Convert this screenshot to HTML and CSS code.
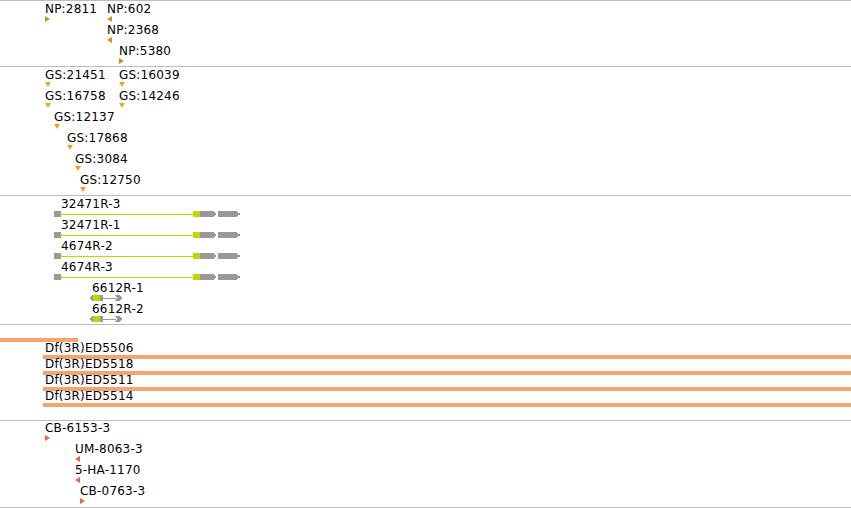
FILE: index.html
```html
<!DOCTYPE html>
<html>
<head>
<meta charset="utf-8">
<link rel="stylesheet" href="styles.css">
</head>
<body>
<div class="tracks">
  <div class="track t1">
    <div class="feat" style="left:45px;top:1px"><span class="lbl">NP:2811</span><i class="tri r np"></i></div>
    <div class="feat" style="left:107px;top:1px"><span class="lbl">NP:602</span><i class="tri l np"></i></div>
    <div class="feat" style="left:107px;top:22px"><span class="lbl">NP:2368</span><i class="tri l np"></i></div>
    <div class="feat" style="left:119px;top:43px"><span class="lbl">NP:5380</span><i class="tri r np"></i></div>
  </div>
  <div class="track t2">
    <div class="feat" style="left:45px;top:1px"><span class="lbl">GS:21451</span><i class="tri d"></i></div>
    <div class="feat" style="left:119px;top:1px"><span class="lbl">GS:16039</span><i class="tri d"></i></div>
    <div class="feat" style="left:45px;top:22px"><span class="lbl">GS:16758</span><i class="tri d"></i></div>
    <div class="feat" style="left:119px;top:22px"><span class="lbl">GS:14246</span><i class="tri d"></i></div>
    <div class="feat" style="left:54px;top:43px"><span class="lbl">GS:12137</span><i class="tri d"></i></div>
    <div class="feat" style="left:67px;top:64px"><span class="lbl">GS:17868</span><i class="tri d"></i></div>
    <div class="feat" style="left:75px;top:85px"><span class="lbl">GS:3084</span><i class="tri d"></i></div>
    <div class="feat" style="left:80px;top:106px"><span class="lbl">GS:12750</span><i class="tri d"></i></div>
  </div>
  <div class="track t3">
    <div class="feat" style="left:54px;top:1px"><span class="lbl in7">32471R-3</span>
      <svg class="gene" width="188" height="6" viewBox="0 0 188 6"><rect x="0" y="0" width="7" height="6" fill="#999"/><polygon points="6,2 9,3 6,4" fill="#c3d400"/><rect x="7" y="3" width="132" height="1" fill="#c3d400"/><rect x="139" y="0" width="7" height="6" fill="#c3d400"/><polygon points="146,0 159,0 163,3 159,6 146,6" fill="#999"/><polygon points="164,0 182,0 187,3 182,6 164,6" fill="#999"/></svg></div>
    <div class="feat" style="left:54px;top:22px"><span class="lbl in7">32471R-1</span>
      <svg class="gene" width="188" height="6" viewBox="0 0 188 6"><rect x="0" y="0" width="7" height="6" fill="#999"/><polygon points="6,2 9,3 6,4" fill="#c3d400"/><rect x="7" y="3" width="132" height="1" fill="#c3d400"/><rect x="139" y="0" width="7" height="6" fill="#c3d400"/><polygon points="146,0 159,0 163,3 159,6 146,6" fill="#999"/><polygon points="164,0 182,0 187,3 182,6 164,6" fill="#999"/></svg></div>
    <div class="feat" style="left:54px;top:43px"><span class="lbl in7">4674R-2</span>
      <svg class="gene" width="188" height="6" viewBox="0 0 188 6"><rect x="0" y="0" width="7" height="6" fill="#999"/><polygon points="6,2 9,3 6,4" fill="#c3d400"/><rect x="7" y="3" width="132" height="1" fill="#c3d400"/><rect x="139" y="0" width="7" height="6" fill="#c3d400"/><polygon points="146,0 159,0 163,3 159,6 146,6" fill="#999"/><polygon points="164,0 182,0 187,3 182,6 164,6" fill="#999"/></svg></div>
    <div class="feat" style="left:54px;top:64px"><span class="lbl in7">4674R-3</span>
      <svg class="gene" width="188" height="6" viewBox="0 0 188 6"><rect x="0" y="0" width="7" height="6" fill="#999"/><polygon points="6,2 9,3 6,4" fill="#c3d400"/><rect x="7" y="3" width="132" height="1" fill="#c3d400"/><rect x="139" y="0" width="7" height="6" fill="#c3d400"/><polygon points="146,0 159,0 163,3 159,6 146,6" fill="#999"/><polygon points="164,0 182,0 187,3 182,6 164,6" fill="#999"/></svg></div>
    <div class="feat" style="left:89px;top:85px"><span class="lbl in3">6612R-1</span>
      <svg class="gene" width="35" height="6" viewBox="0 0 35 6"><polygon points="0,3 4,0 4,6" fill="#999"/><rect x="4" y="0" width="7" height="6" fill="#c3d400"/><rect x="11" y="0" width="3" height="6" fill="#999"/><rect x="14" y="3" width="13" height="1" fill="#999"/><polygon points="26,0 30,0 34,3 30,6 26,6 28,3" fill="#999"/></svg></div>
    <div class="feat" style="left:89px;top:106px"><span class="lbl in3">6612R-2</span>
      <svg class="gene" width="35" height="6" viewBox="0 0 35 6"><polygon points="0,3 4,0 4,6" fill="#999"/><rect x="4" y="0" width="7" height="6" fill="#c3d400"/><rect x="11" y="0" width="3" height="6" fill="#999"/><rect x="14" y="3" width="13" height="1" fill="#999"/><polygon points="26,0 30,0 34,3 30,6 26,6 28,3" fill="#999"/></svg></div>
  </div>
  <div class="track t4">
    <div class="bar first"></div>
    <div class="feat wide" style="left:43px;top:16px"><span class="lbl in2">Df(3R)ED5506</span><i class="bar"></i></div>
    <div class="feat wide" style="left:43px;top:32px"><span class="lbl in2">Df(3R)ED5518</span><i class="bar"></i></div>
    <div class="feat wide" style="left:43px;top:48px"><span class="lbl in2">Df(3R)ED5511</span><i class="bar"></i></div>
    <div class="feat wide" style="left:43px;top:64px"><span class="lbl in2">Df(3R)ED5514</span><i class="bar"></i></div>
  </div>
  <div class="track t5">
    <div class="feat" style="left:45px;top:0px"><span class="lbl">CB-6153-3</span><i class="tri r cb"></i></div>
    <div class="feat" style="left:75px;top:21px"><span class="lbl">UM-8063-3</span><i class="tri l cb"></i></div>
    <div class="feat" style="left:75px;top:42px"><span class="lbl">5-HA-1170</span><i class="tri l cb"></i></div>
    <div class="feat" style="left:80px;top:63px"><span class="lbl">CB-0763-3</span><i class="tri r cb"></i></div>
  </div>
</div>
</body>
</html>
```

FILE: styles.css
```css
html, body {
  margin: 0;
  padding: 0;
  background: #fff;
}
body {
  width: 851px;
  height: 508px;
  overflow: hidden;
  font-family: "DejaVu Sans", Verdana, sans-serif;
  font-size: 12px;
  color: #000;
}
.tracks {
  display: flex;
  flex-direction: column;
  border-bottom: 1px solid #bdbdbd;
}
.track {
  position: relative;
  border-top: 1px solid #bdbdbd;
  overflow: hidden;
}
.t1 { height: 65px; }
.t2 { height: 128px; }
.t3 { height: 128px; }
.t4 { height: 95px; }
.t5 { height: 86px; }

.feat {
  position: absolute;
  display: flex;
  flex-direction: column;
  align-items: flex-start;
}
.feat.wide { right: 0; align-items: stretch; }
.lbl {
  display: block;
  line-height: 14px;
  height: 14px;
  white-space: nowrap;
  letter-spacing: 0.2px;
}
.lbl.in7 { margin-left: 7px; }
.lbl.in3 { margin-left: 3px; }
.lbl.in2 { margin-left: 2px; }
.t4 .lbl { padding-top: 1px; height: 13px; line-height: 13px; }

.tri {
  display: block;
  width: 0;
  height: 0;
}
.tri.r {
  border-left: 5px solid;
  border-top: 3px solid transparent;
  border-bottom: 3px solid transparent;
}
.tri.l {
  border-right: 5px solid;
  border-top: 3px solid transparent;
  border-bottom: 3px solid transparent;
}
.tri.d {
  border-top: 5px solid #eda424;
  border-left: 3px solid transparent;
  border-right: 3px solid transparent;
}
.tri.np { border-left-color: #d3921a; border-right-color: #d3921a; }
.tri.l.np { border-left: none; }
.tri.r.np { border-right: none; }
.tri.cb { border-left-color: #f0643c; border-right-color: #f0643c; }
.tri.l.cb { border-left: none; }
.tri.r.cb { border-right: none; }

.gene {
  display: block;
  shape-rendering: crispEdges;
}

.bar {
  display: block;
  height: 4px;
  background: #f5a470;
}
.bar.first {
  position: absolute;
  left: 0;
  top: 13px;
  width: 78px;
}
```
